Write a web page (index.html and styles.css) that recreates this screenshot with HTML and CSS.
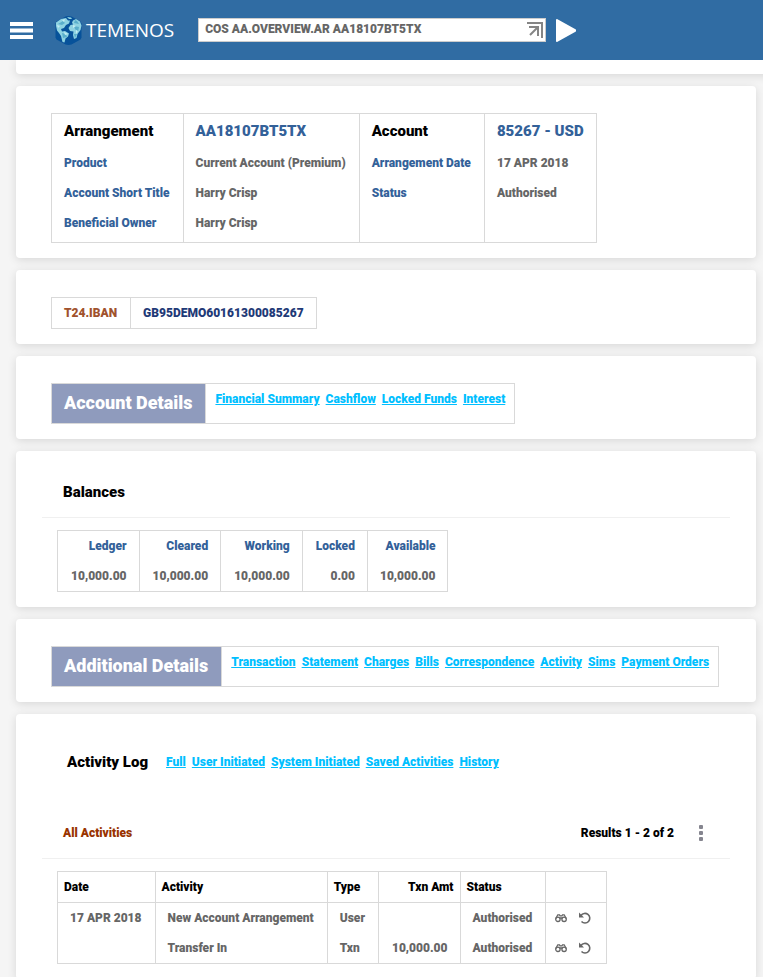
FILE: index.html
```html
<!DOCTYPE html>
<html lang="en">
<head>
    <meta charset="UTF-8">
    <meta name="viewport" content="width=device-width, initial-scale=1.0">
    <title>Arrangement Overview</title>
    <link rel="stylesheet" href="styles.css">
</head>
<body>

    <header class="topbar">
        <button class="menu-btn" type="button" aria-label="Menu">
            <svg width="23" height="17" viewBox="0 0 23 17"><path fill="#fff" d="M0 0h23v4H0zM0 6.500h23v4H0zM0 13h23v4H0z"/></svg>
        </button>
        <a class="logo" href="#">
            <svg width="27" height="29" viewBox="0 0 27 29">
                <path fill="#07529a" d="M13.500 0l3 .5 9 5 1 2v14l-1 2-9 5-3 .5-3-.5-9-5-1-2v-14l1-2 9-5z"/>
                <path fill="#8fd3e2" d="M1 6.500L6 3l5-1 2 2.500 2 0-1 3-3 1.500-2 3-3 1 1 2.500 3-.5 4 2.500-1 3-2.500 2-1 4-2-.5-1.500-6-2-3-2-2.500-1-4.500z"/>
                <path fill="#8fd3e2" d="M12 1l4 .5 1 1.500-3 0zM18 4.500l3-1.500 4 2.500 1.500 4-1 4.500-3 4-1 4-2.500 1-1-4 .5-3.500-3.500-.5-1.500-3 2-3 2.500-.5-1-2z"/>
                <path fill="#5aaecb" d="M3 8l5-3 2 2-3 2zM7 17l4 1 1 3-4 1zM19 10l5 1-1 5-3-3zM20 4l2 1 2 3-5-1zM19 18l3 0-2 4z"/>
                <path fill="#c5eef2" d="M7 4l3-1-1 3zM9 16l4 2-3 1zM18 9l3 1-3 2zM21 14l2 1-2 3zM2 9l3 1-2 2z"/>
            </svg>
            <span>TEMENOS</span>
        </a>
        <form class="command">
            <div class="command-box">
                <input type="text" aria-label="Command" value="COS AA.OVERVIEW.AR AA18107BT5TX">
                <button type="button" aria-label="Open in new window">
                    <svg width="16" height="16" viewBox="0 0 16 16" fill="none" stroke="#858585" stroke-width="2"><path d="M0 1h15v15" /><path d="M2 5h9v9M3 13l8-8"/></svg>
                </button>
            </div>
            <button class="run-btn" type="button" aria-label="Run">
                <svg width="20" height="23" viewBox="0 0 20 23"><path fill="#fff" stroke="#fff" stroke-width="2" stroke-linejoin="round" d="M1 1l18 10v1L1 22z"/></svg>
            </button>
        </form>
    </header>

    <main>
        <section class="card card-wide"></section>

        <section class="card">
            <table class="grid summary">
                <tr>
                    <th>Arrangement</th>
                    <td>AA18107BT5TX</td>
                    <th>Account</th>
                    <td>85267 - USD</td>
                </tr>
                <tr>
                    <th>Product</th>
                    <td>Current Account (Premium)</td>
                    <th>Arrangement Date</th>
                    <td>17 APR 2018</td>
                </tr>
                <tr>
                    <th>Account Short Title</th>
                    <td>Harry Crisp</td>
                    <th>Status</th>
                    <td>Authorised</td>
                </tr>
                <tr>
                    <th>Beneficial Owner</th>
                    <td>Harry Crisp</td>
                    <th></th>
                    <td></td>
                </tr>
            </table>
        </section>

        <section class="card">
            <table class="grid iban">
                <tr>
                    <th>T24.IBAN</th>
                    <td>GB95DEMO60161300085267</td>
                </tr>
            </table>
        </section>

        <section class="card">
            <div class="tabs">
                <h2>Account Details</h2>
                <nav class="links">
                    <a href="#">Financial Summary</a>
                    <a href="#">Cashflow</a>
                    <a href="#">Locked Funds</a>
                    <a href="#">Interest</a>
                </nav>
            </div>
        </section>

        <section class="card">
            <div class="panel-head">
                <h3>Balances</h3>
            </div>
            <table class="grid inset balances">
                <tr>
                    <th class="num">Ledger</th>
                    <th class="num">Cleared</th>
                    <th class="num">Working</th>
                    <th class="num">Locked</th>
                    <th class="num">Available</th>
                </tr>
                <tr>
                    <td class="num">10,000.00</td>
                    <td class="num">10,000.00</td>
                    <td class="num">10,000.00</td>
                    <td class="num">0.00</td>
                    <td class="num">10,000.00</td>
                </tr>
            </table>
        </section>

        <section class="card">
            <div class="tabs">
                <h2>Additional Details</h2>
                <nav class="links">
                    <a href="#">Transaction</a>
                    <a href="#">Statement</a>
                    <a href="#">Charges</a>
                    <a href="#">Bills</a>
                    <a href="#">Correspondence</a>
                    <a href="#">Activity</a>
                    <a href="#">Sims</a>
                    <a href="#">Payment Orders</a>
                </nav>
            </div>
        </section>

        <section class="card">
            <div class="log-head">
                <h3>Activity Log</h3>
                <nav class="links">
                    <a href="#">Full</a>
                    <a href="#">User Initiated</a>
                    <a href="#">System Initiated</a>
                    <a href="#">Saved Activities</a>
                    <a href="#">History</a>
                </nav>
            </div>
            <div class="panel-head">
                <h4>All Activities</h4>
                <span class="results">Results 1 - 2 of 2</span>
                <button class="more-btn" type="button" aria-label="More options">
                    <svg width="4" height="16" viewBox="0 0 4 16" fill="#85858f"><rect width="4" height="4" rx="1"/><rect y="6" width="4" height="4" rx="1"/><rect y="12" width="4" height="4" rx="1"/></svg>
                </button>
            </div>
            <table class="grid inset activities">
                <thead>
                    <tr>
                        <th>Date</th>
                        <th>Activity</th>
                        <th>Type</th>
                        <th class="num">Txn Amt</th>
                        <th>Status</th>
                        <th></th>
                    </tr>
                </thead>
                <tbody>
                    <tr>
                        <td>17 APR 2018</td>
                        <td>New Account Arrangement</td>
                        <td>User</td>
                        <td class="num"></td>
                        <td>Authorised</td>
                        <td>
                            <div class="actions">
                                <button type="button" aria-label="View"><svg width="12" height="12" viewBox="0 0 12 12"><use href="#icon-view"/></svg></button>
                                <button type="button" aria-label="Reverse"><svg width="12" height="12" viewBox="0 0 12 12"><use href="#icon-undo"/></svg></button>
                            </div>
                        </td>
                    </tr>
                    <tr>
                        <td></td>
                        <td>Transfer In</td>
                        <td>Txn</td>
                        <td class="num">10,000.00</td>
                        <td>Authorised</td>
                        <td>
                            <div class="actions">
                                <button type="button" aria-label="View"><svg width="12" height="12" viewBox="0 0 12 12"><use href="#icon-view"/></svg></button>
                                <button type="button" aria-label="Reverse"><svg width="12" height="12" viewBox="0 0 12 12"><use href="#icon-undo"/></svg></button>
                            </div>
                        </td>
                    </tr>
                </tbody>
            </table>
        </section>
    </main>

    <svg class="sprite" width="0" height="0">
        <symbol id="icon-view" viewBox="0 0 12 12">
            <g fill="none" stroke="#666" stroke-width="1.300">
                <circle cx="2.900" cy="7.300" r="2.200"/>
                <circle cx="9.100" cy="7.300" r="2.200"/>
                <path d="M.8 6.500L2.800 2.800h1.700l.5 1h2l.5-1h1.700l2 3.700M4.500 6h3"/>
            </g>
        </symbol>
        <symbol id="icon-undo" viewBox="0 0 12 12">
            <path fill="none" stroke="#666" stroke-width="1.600" d="M2 3.500A4.800 4.800 0 1 1 2.500 9.500"/>
            <path fill="#666" d="M0 .5v5h5z"/>
        </symbol>
    </svg>

</body>
</html>
```

FILE: styles.css
```css
* {
    box-sizing: border-box;
}
body {
    margin: 0;
    height: 100vh;
    overflow: hidden;
    background-color: #f5f5f5;
    font-family: Roboto, Arial, sans-serif;
    font-size: 12px;
    font-weight: 900;
    color: #666;
}
h2, h3, h4 {
    margin: 0;
    font-weight: 900;
}
button {
    display: flex;
    padding: 0;
    border: none;
    background: none;
    cursor: pointer;
}
.sprite {
    position: absolute;
}

/* top bar */
.topbar {
    position: relative;
    z-index: 1;
    display: flex;
    align-items: center;
    height: 60px;
    padding: 0 10px;
    background-color: #306ca3;
}
.logo {
    display: flex;
    align-items: center;
    gap: 4px;
    margin-left: 22px;
    color: #fff;
    font-family: "Open Sans", sans-serif;
    font-size: 19px;
    font-weight: normal;
    text-decoration: none;
}
.command {
    display: flex;
    flex: 1;
    align-items: center;
    gap: 10px;
    margin-left: 24px;
}
.command-box {
    display: flex;
    align-items: center;
    width: 348px;
    height: 24px;
    padding: 0 2px 0 6px;
    border: 1px solid #ccc;
    background-color: #fff;
}
.command-box input {
    flex: 1;
    min-width: 0;
    padding: 0 0 2px;
    border: none;
    outline: none;
    background: none;
    color: #666;
    font: inherit;
}

/* cards */
.card {
    margin: 0 7px 12px 16px;
    padding: 27px 26px 15px;
    border-radius: 4px;
    background-color: #fff;
    box-shadow: 0 2px 10px rgba(0, 0, 0, 0.12);
}
.card-wide {
    height: 14px;
    margin-right: -20px;
    padding: 0;
    border-radius: 0 0 4px 4px;
}

/* tables */
.grid {
    margin-left: 9px;
    border: 1px solid #d9d9d9;
    border-spacing: 0;
    line-height: 30px;
    white-space: nowrap;
}
.grid th, .grid td {
    height: 30px;
    padding: 0 13px 0 12px;
    font-weight: 900;
    text-align: left;
}
.grid th + th, .grid th + td, .grid td + th, .grid td + td {
    border-left: 1px solid #d9d9d9;
}
.grid th {
    color: #336199;
}
.grid .num {
    padding: 0 12px 0 13px;
    text-align: right;
}
.grid th:last-child, .grid td:last-child {
    padding-left: 12px;
    padding-right: 12px;
}
.inset {
    margin-left: 15px;
}
.summary tr:first-child th, .summary tr:first-child td {
    height: 34px;
    font-size: 15px;
}
.summary tr:first-child th {
    color: #000;
}
.summary tr:first-child td {
    color: #336199;
}
.summary tr:last-child th, .summary tr:last-child td {
    padding-bottom: 4px;
}
.iban th {
    color: #a0522d;
}
.iban td {
    color: #1f3a77;
}
.activities th, .activities th.num {
    padding: 0 6px;
    border-bottom: 1px solid #d9d9d9;
    color: #000;
}
.actions {
    display: flex;
    gap: 12px;
    padding-right: 3px;
    margin-left: -3px;
}

/* section titles with links */
.tabs {
    display: flex;
    width: fit-content;
    margin-left: 9px;
    border: 1px solid #d9d9d9;
}
.tabs h2 {
    padding: 0 13px 1px 12px;
    border-right: 1px solid #d9d9d9;
    background-color: #8f9bbd;
    color: #fff;
    font-size: 18px;
    line-height: 38px;
    white-space: nowrap;
}
.links {
    display: flex;
    gap: 6px;
    line-height: 30px;
    white-space: nowrap;
}
.links a {
    color: #00bfff;
}
.tabs .links {
    padding: 0 9px;
}
.panel-head {
    display: flex;
    align-items: center;
    height: 40px;
    margin-bottom: 12px;
    padding: 0 27px 12px 21px;
    border-bottom: 1px solid #f0f0f0;
}
.panel-head h3, .log-head h3 {
    color: #000;
    font-size: 15px;
}
.panel-head h4 {
    color: #993300;
}
.results {
    margin-left: auto;
    color: #000;
}
.more-btn {
    margin-left: 25px;
}
.log-head {
    display: flex;
    align-items: center;
    gap: 18px;
    margin: 6px 0 42px 25px;
}
```
